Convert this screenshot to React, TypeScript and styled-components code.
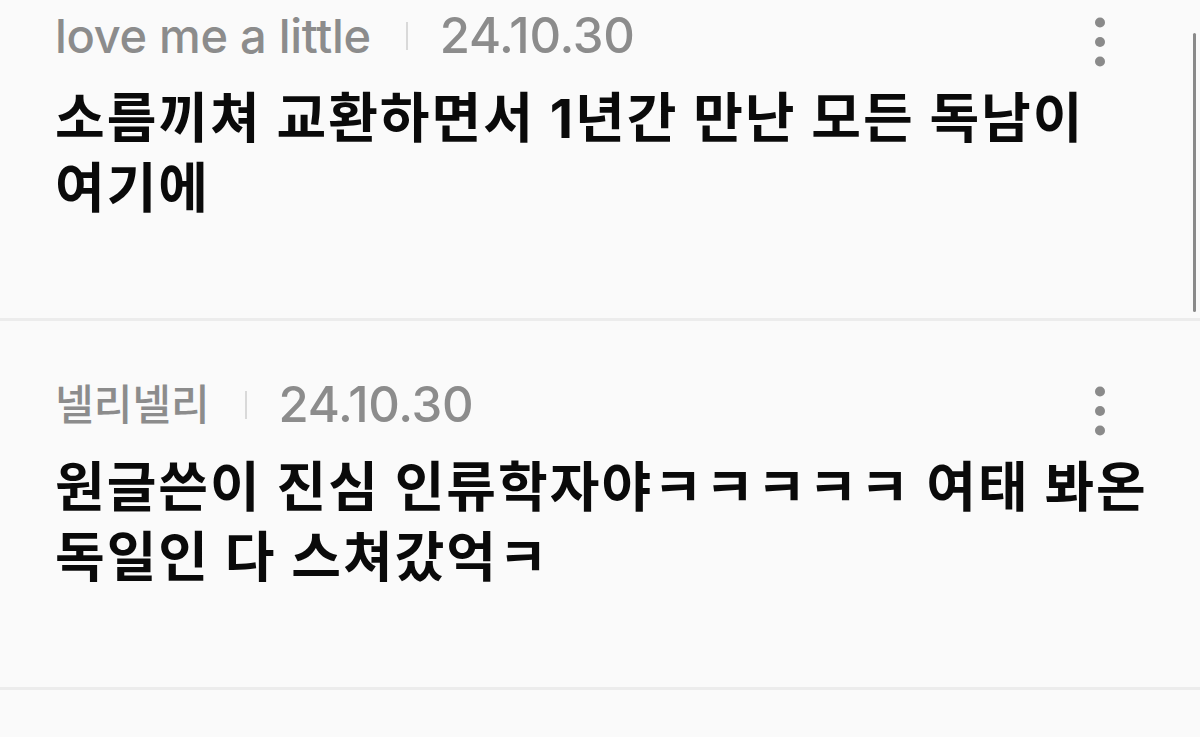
import styled, { createGlobalStyle } from "styled-components";

const GlobalStyle = createGlobalStyle`
  html, body {
    margin: 0;
    padding: 0;
    background: #fafafa;
    overflow: hidden;
  }
  body {
    font-family: "Inter", "Noto Sans CJK KR", sans-serif;
  }
`;

const Screen = styled.div`
  position: relative;
  width: 1200px;
  height: 737px;
  overflow: hidden;
  background: #fafafa;
`;

// list is scrolled a little, so the first card starts above the fold
const CommentList = styled.ul`
  list-style: none;
  margin: -48px 0 0;
  padding: 0;
`;

const CommentItem = styled.li`
  padding: 60px 40px 94px 55px;
  border-bottom: 3px solid #ececec;
`;

const MetaRow = styled.div`
  display: flex;
  align-items: flex-start;
  justify-content: space-between;
  height: 60px;
`;

const Meta = styled.div`
  display: flex;
  align-items: center;
  height: 48px;
  color: #8c8c8c;
  font-weight: 500;
  line-height: 48px;
`;

const Nick = styled.span<{ $korean?: boolean }>`
  font-size: ${(p) => (p.$korean ? "42px" : "47px")};
  letter-spacing: ${(p) => (p.$korean ? "0" : "-0.3px")};
`;

const Sep = styled.span`
  width: 2px;
  height: 28px;
  margin: 0 32px 0 35px;
  background: #d9d9d9;
`;

const DateText = styled.span`
  font-size: 49px;
  letter-spacing: -0.3px;
`;

const MoreButton = styled.button`
  display: flex;
  padding: 0;
  margin-right: 50px;
  border: none;
  background: none;
  color: #8a8a8a;
`;

const Body = styled.p`
  margin: 12px 0 0;
  color: #0a0a0a;
  font-size: 54px;
  font-weight: 700;
  line-height: 70px;
  letter-spacing: 2px;
  word-break: keep-all;
`;

const ScrollThumb = styled.div`
  position: absolute;
  top: 33px;
  right: 4px;
  width: 3px;
  height: 279px;
  border-radius: 2px;
  background: #8a8a8a;
`;

const KebabIcon = () => (
  <svg width="20" height="60" viewBox="0 0 20 60" fill="currentColor">
    <circle cx="10" cy="10.5" r="5" />
    <circle cx="10" cy="30" r="5" />
    <circle cx="10" cy="49.5" r="5" />
  </svg>
);

interface Comment {
  nick: string;
  korean?: boolean;
  date: string;
  text: string;
}

const comments: Comment[] = [
  {
    nick: "love me a little",
    date: "24.10.30",
    text: "소름끼쳐 교환하면서 1년간 만난 모든 독남이 여기에",
  },
  {
    nick: "넬리넬리",
    korean: true,
    date: "24.10.30",
    text: "원글쓴이 진심 인류학자야ㅋㅋㅋㅋㅋ 여태 봐온 독일인 다 스쳐갔억ㅋ",
  },
];

const App = () => {
  return (
    <Screen>
      <GlobalStyle />
      <CommentList>
        {comments.map((c, i) => (
          <CommentItem key={i}>
            <MetaRow>
              <Meta>
                <Nick $korean={c.korean}>{c.nick}</Nick>
                <Sep />
                <DateText>{c.date}</DateText>
              </Meta>
              <MoreButton aria-label="more">
                <KebabIcon />
              </MoreButton>
            </MetaRow>
            <Body>{c.text}</Body>
          </CommentItem>
        ))}
      </CommentList>
      <ScrollThumb />
    </Screen>
  );
};

export default App;
